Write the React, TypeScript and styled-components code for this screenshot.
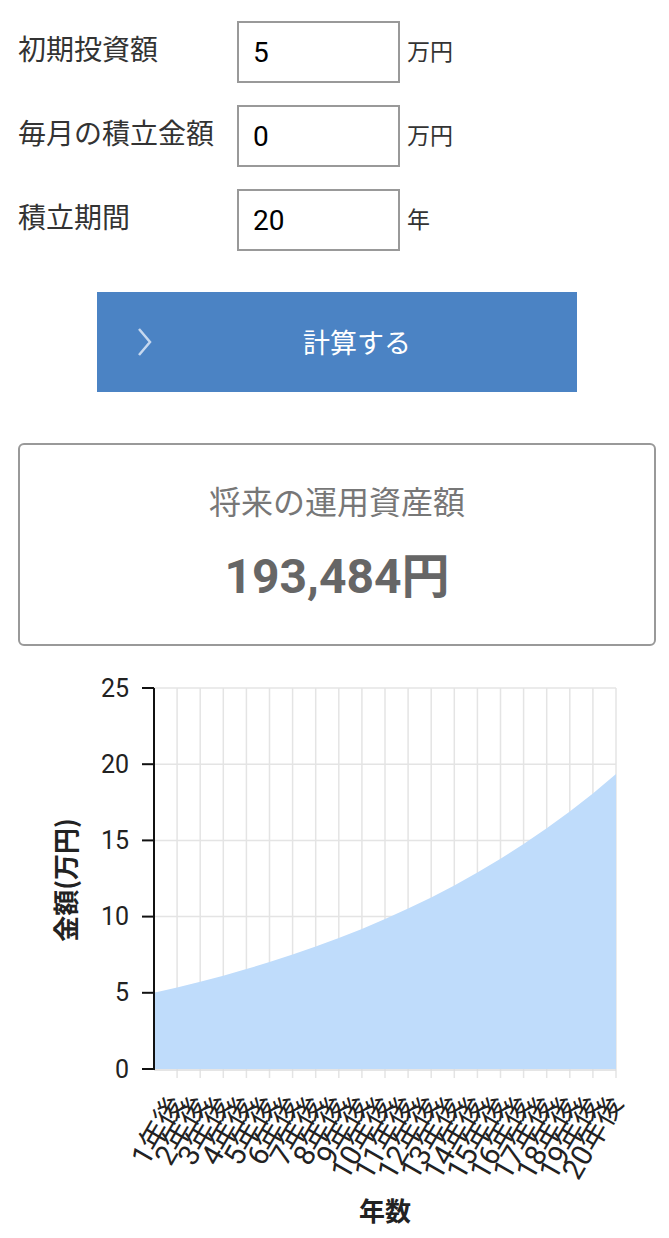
import React from "react";
import styled, { createGlobalStyle } from "styled-components";

const GlobalStyle = createGlobalStyle`
  html, body { margin: 0; padding: 0; background: #fff; }
  body { font-family: Roboto, "Noto Sans CJK JP", sans-serif; color: #333; }
`;

const Page = styled.div`
  width: 669px;
  display: flex;
  flex-direction: column;
`;

const Form = styled.div`
  display: flex;
  flex-direction: column;
  gap: 22px;
  padding: 21px 0 0 18px;
`;

const Row = styled.div`
  display: grid;
  grid-template-columns: 219px 163px auto;
  align-items: center;
`;

const Label = styled.div`
  font-family: "Noto Sans CJK JP", sans-serif;
  font-size: 28px;
  line-height: 36px;
  color: #333;
  margin-top: -8px;
`;

const InputBox = styled.div`
  box-sizing: border-box;
  height: 62px;
  border: 2px solid #999;
  display: flex;
  align-items: center;
  padding-left: 14px;
  font-family: Roboto, sans-serif;
  font-size: 28px;
  color: #000;
`;

const Unit = styled.div`
  font-family: "Noto Sans CJK JP", sans-serif;
  font-size: 23px;
  color: #333;
  padding-left: 7px;
  margin-top: -4px;
`;

const Button = styled.button`
  margin: 41px 0 0 97px;
  width: 480px;
  height: 100px;
  border: none;
  background: #4b83c4;
  display: flex;
  align-items: center;
  padding: 0 15px 0 40px;
  cursor: pointer;
`;

const Chevron = styled.svg`
  width: 15px;
  height: 30px;
  flex: none;
`;

const ButtonText = styled.span`
  flex: 1;
  text-align: center;
  color: #fff;
  font-family: "Noto Sans CJK JP", sans-serif;
  font-size: 27px;
  margin-top: -2px;
`;

const Card = styled.div`
  margin: 51px 13px 0 18px;
  box-sizing: border-box;
  height: 203px;
  border: 2px solid #999;
  border-radius: 6px;
  display: flex;
  flex-direction: column;
  align-items: center;
  padding-top: 36px;
`;

const CardTitle = styled.div`
  font-family: "Noto Sans CJK JP", sans-serif;
  font-size: 32px;
  line-height: 38px;
  color: #777;
`;

const Amount = styled.div`
  margin-top: 29px;
  font-family: Roboto, "Noto Sans CJK JP", sans-serif;
  font-weight: 700;
  font-size: 48px;
  line-height: 58px;
  color: #666;
`;

const ChartSvg = styled.svg`
  display: block;
  margin-top: 14px;
`;

const fields = [
  { label: "初期投資額", value: "5", unit: "万円" },
  { label: "毎月の積立金額", value: "0", unit: "万円" },
  { label: "積立期間", value: "20", unit: "年" },
];

const X0 = 154;
const STEP = 23.1;
const YB = 409;
const YT = 28;
const PER = (YB - YT) / 25;

function Chart() {
  const pts = Array.from({ length: 21 }, (_, i) => ({
    x: X0 + i * STEP,
    y: YB - 5 * Math.pow(1.07, i) * PER,
  }));
  const area =
    `M${X0},${YB} ` +
    pts.map((p) => `L${p.x.toFixed(1)},${p.y.toFixed(1)}`).join(" ") +
    ` L${pts[20].x.toFixed(1)},${YB} Z`;
  const yTicks = [0, 5, 10, 15, 20, 25];
  return (
    <ChartSvg width={669} height={578} viewBox="0 0 669 578">
      {pts.slice(1).map((p, i) => (
        <line key={"v" + i} x1={p.x} y1={YT} x2={p.x} y2={YB + 9} stroke="#e4e4e4" strokeWidth={1.5} />
      ))}
      {yTicks.slice(1).map((t) => (
        <line key={"h" + t} x1={X0} y1={YB - t * PER} x2={pts[20].x} y2={YB - t * PER} stroke="#e4e4e4" strokeWidth={1.5} />
      ))}
      <path d={area} fill="#bfdcfb" />
      <line x1={X0} y1={YB + 1} x2={pts[20].x} y2={YB + 1} stroke="#dcdcdc" strokeWidth={1.5} />
      <line x1={X0} y1={YT} x2={X0} y2={YB + 1} stroke="#111" strokeWidth={2} />
      {yTicks.map((t) => (
        <g key={"t" + t}>
          <line x1={142} y1={YB - t * PER} x2={X0} y2={YB - t * PER} stroke="#111" strokeWidth={2} />
          <text
            x={129}
            y={YB - t * PER}
            textAnchor="end"
            dominantBaseline="central"
            fontFamily="Roboto, sans-serif"
            fontSize={25}
            fill="#222"
          >
            {t}
          </text>
        </g>
      ))}
      <text
        transform={`translate(64 ${880 - 660}) rotate(-90)`}
        textAnchor="middle"
        dominantBaseline="central"
        fontFamily="'Noto Sans CJK JP', sans-serif"
        fontWeight={700}
        fontSize={26}
        fill="#222"
      >
        金額(万円)
      </text>
      {pts.slice(1).map((p, i) => (
        <text
          key={"xl" + i}
          transform={`translate(${(p.x - 1).toFixed(1)} 438) rotate(-60)`}
          textAnchor="end"
          dominantBaseline="central"
          fontFamily="Roboto, 'Noto Sans CJK JP', sans-serif"
          fontSize={29}
          fill="#222"
        >
          {i + 1}年後
        </text>
      ))}
      <text
        x={385}
        y={549}
        textAnchor="middle"
        dominantBaseline="central"
        fontFamily="'Noto Sans CJK JP', sans-serif"
        fontWeight={700}
        fontSize={26}
        fill="#222"
      >
        年数
      </text>
    </ChartSvg>
  );
}

export default function App() {
  return (
    <Page>
      <GlobalStyle />
      <Form>
        {fields.map((f) => (
          <Row key={f.label}>
            <Label>{f.label}</Label>
            <InputBox>{f.value}</InputBox>
            <Unit>{f.unit}</Unit>
          </Row>
        ))}
      </Form>
      <Button>
        <Chevron viewBox="0 0 15 30">
          <polyline points="2,2 13,15 2,28" fill="none" stroke="#c6d8ef" strokeWidth={2.5} />
        </Chevron>
        <ButtonText>計算する</ButtonText>
      </Button>
      <Card>
        <CardTitle>将来の運用資産額</CardTitle>
        <Amount>193,484円</Amount>
      </Card>
      <Chart />
    </Page>
  );
}
